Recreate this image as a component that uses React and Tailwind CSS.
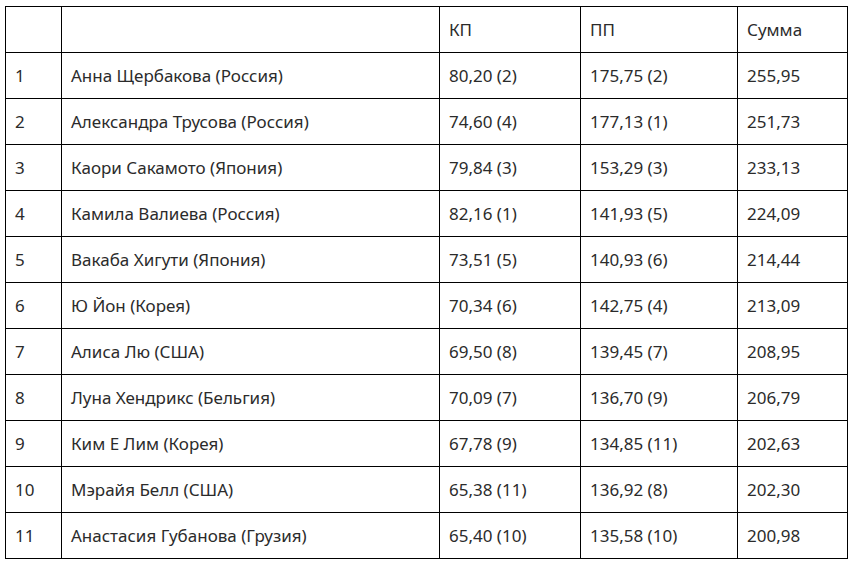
import React from "react";

const rows = [
  ["1", "Анна Щербакова (Россия)", "80,20 (2)", "175,75 (2)", "255,95"],
  ["2", "Александра Трусова (Россия)", "74,60 (4)", "177,13 (1)", "251,73"],
  ["3", "Каори Сакамото (Япония)", "79,84 (3)", "153,29 (3)", "233,13"],
  ["4", "Камила Валиева (Россия)", "82,16 (1)", "141,93 (5)", "224,09"],
  ["5", "Вакаба Хигути (Япония)", "73,51 (5)", "140,93 (6)", "214,44"],
  ["6", "Ю Йон (Корея)", "70,34 (6)", "142,75 (4)", "213,09"],
  ["7", "Алиса Лю (США)", "69,50 (8)", "139,45 (7)", "208,95"],
  ["8", "Луна Хендрикс (Бельгия)", "70,09 (7)", "136,70 (9)", "206,79"],
  ["9", "Ким Е Лим (Корея)", "67,78 (9)", "134,85 (11)", "202,63"],
  ["10", "Мэрайя Белл (США)", "65,38 (11)", "136,92 (8)", "202,30"],
  ["11", "Анастасия Губанова (Грузия)", "65,40 (10)", "135,58 (10)", "200,98"],
];

const cell = "border border-black h-[46px] pl-[9px] pr-2 text-left align-middle font-normal";

export default function App() {
  return (
    <div className="bg-white w-[851px] h-[563px] pt-[6px] pl-[5px] text-[#2b2b2b] text-[17px] leading-[24px] font-['Noto_Sans',sans-serif]">
      <table className="border-collapse table-fixed w-[842px]">
        <colgroup>
          <col className="w-[56px]" />
          <col className="w-[378px]" />
          <col className="w-[141px]" />
          <col className="w-[157px]" />
          <col className="w-[110px]" />
        </colgroup>
        <thead>
          <tr>
            <th className={cell}></th>
            <th className={cell}></th>
            <th className={cell}>КП</th>
            <th className={cell}>ПП</th>
            <th className={cell}>Сумма</th>
          </tr>
        </thead>
        <tbody>
          {rows.map((r) => (
            <tr key={r[0]}>
              {r.map((c, i) => (
                <td key={i} className={cell}>{c}</td>
              ))}
            </tr>
          ))}
        </tbody>
      </table>
    </div>
  );
}
